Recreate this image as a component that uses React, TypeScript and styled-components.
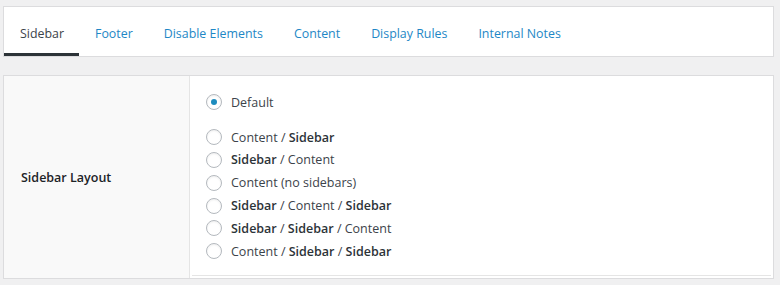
import React, { useState } from 'react';
import styled, { createGlobalStyle } from 'styled-components';

const GlobalStyle = createGlobalStyle`
    html, body {
        margin: 0;
        padding: 0;
        background: #f0f0f1;
    }
    body {
        font-family: 'Open Sans', 'Noto Sans', sans-serif;
        font-size: 12.5px;
        color: #3c434a;
    }
`;

const Page = styled.div`
    width: 771px;
    padding: 6px 0 0 3px;
`;

const TabBar = styled.nav`
    display: flex;
    height: 49px;
    background: #fff;
    border: 1px solid #dcdcde;
`;

const Tab = styled.button<{ $active?: boolean }>`
    display: flex;
    align-items: center;
    box-sizing: border-box;
    padding: 6px 15px 0 16px;
    border: 0;
    border-bottom: 3px solid ${p => (p.$active ? '#2c3338' : 'transparent')};
    background: none;
    font: inherit;
    font-size: 12.4px;
    color: ${p => (p.$active ? '#3c434a' : '#1e87c6')};
    cursor: pointer;
`;

const Panel = styled.div`
    display: flex;
    margin-top: 18px;
    background: #fff;
    border: 1px solid #dcdcde;
    height: 202px;
`;

const LabelCell = styled.div`
    display: flex;
    align-items: center;
    width: 168px;
    padding-left: 17px;
    background: #f9f9f9;
    border-right: 1px solid #e5e5e5;
    font-weight: 600;
    color: #1d2327;
`;

const FieldCell = styled.div`
    flex: 1;
    display: flex;
    padding: 0 2px 2px 2px;
`;

const FieldInner = styled.div`
    flex: 1;
    padding: 15px 0 0 14px;
    border-bottom: 1px solid #e5e5e5;
`;

const Group = styled.div`
    margin-bottom: 12px;
`;

const Option = styled.label`
    display: flex;
    align-items: center;
    height: 22.8px;
    color: #3c434a;
    cursor: pointer;

    b {
        font-weight: 600;
        color: #2c3338;
    }
`;

const Radio = styled.span<{ $checked?: boolean }>`
    position: relative;
    box-sizing: border-box;
    width: 16px;
    height: 16px;
    margin-right: 9px;
    border-radius: 50%;
    border: 1px solid #b4b9be;
    background: #fff;
    box-shadow: inset 0 1px 2px rgba(0, 0, 0, 0.07);

    &::after {
        content: '';
        display: ${p => (p.$checked ? 'block' : 'none')};
        position: absolute;
        left: 4px;
        top: 4px;
        width: 6px;
        height: 6px;
        border-radius: 50%;
        background: #1e8cbe;
    }
`;

const tabs = ['Sidebar', 'Footer', 'Disable Elements', 'Content', 'Display Rules', 'Internal Notes'];

const layouts: { id: string; label: React.ReactNode }[] = [
    { id: 'cs', label: <>Content / <b>Sidebar</b></> },
    { id: 'sc', label: <><b>Sidebar</b> / Content</> },
    { id: 'c', label: <>Content (no sidebars)</> },
    { id: 'scs', label: <><b>Sidebar</b> / Content / <b>Sidebar</b></> },
    { id: 'ssc', label: <><b>Sidebar</b> / <b>Sidebar</b> / Content</> },
    { id: 'css', label: <>Content / <b>Sidebar</b> / <b>Sidebar</b></> },
];

const App = () => {
    const [tab, setTab] = useState('Sidebar');
    const [layout, setLayout] = useState('default');

    return (
        <Page>
            <GlobalStyle />
            <TabBar>
                {tabs.map(t => (
                    <Tab key={t} $active={t === tab} onClick={() => setTab(t)}>
                        {t}
                    </Tab>
                ))}
            </TabBar>
            <Panel>
                <LabelCell>Sidebar Layout</LabelCell>
                <FieldCell>
                    <FieldInner>
                        <Group>
                            <Option onClick={() => setLayout('default')}>
                                <Radio $checked={layout === 'default'} />
                                Default
                            </Option>
                        </Group>
                        {layouts.map(l => (
                            <Option key={l.id} onClick={() => setLayout(l.id)}>
                                <Radio $checked={layout === l.id} />
                                <span>{l.label}</span>
                            </Option>
                        ))}
                    </FieldInner>
                </FieldCell>
            </Panel>
        </Page>
    );
};

export default App;
